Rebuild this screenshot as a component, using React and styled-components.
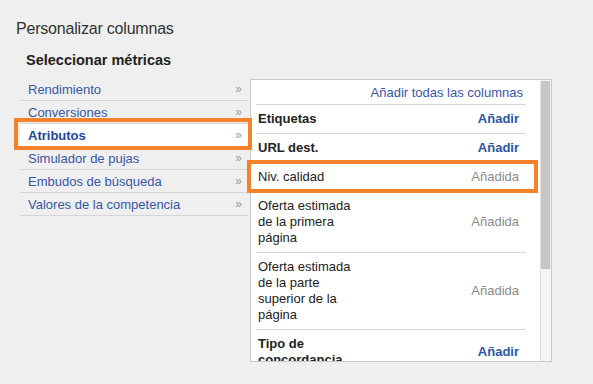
import React from "react";
import styled, { createGlobalStyle } from "styled-components";

const Global = createGlobalStyle`
  html, body { margin: 0; padding: 0; background: #efefef; }
  body { font-family: "Liberation Sans", Arial, sans-serif; width: 593px; height: 384px; overflow: hidden; }
`;

const Page = styled.div`
  padding: 19px 0 0 16px;
`;

const Title = styled.h1`
  margin: 0;
  font-family: "Liberation Sans Narrow", "Arial Narrow", "Liberation Sans", Arial, sans-serif;
  font-size: 16px;
  letter-spacing: -0.2px;
  line-height: 19px;
  font-weight: normal;
  color: #333;
`;

const Subtitle = styled.h2`
  margin: 14px 0 0 10px;
  font-size: 14.5px;
  line-height: 17px;
  font-weight: bold;
  color: #222;
`;

const Main = styled.div`
  display: flex;
  align-items: flex-start;
  margin-top: 9px;
  margin-left: 4px;
`;

const CatList = styled.ul`
  list-style: none;
  margin: 0;
  padding: 0;
  width: 228px;
`;

const CatRow = styled.li`
  position: relative;
  display: flex;
  align-items: center;
  justify-content: space-between;
  height: 22px;
  padding: 0 7px 0 8px;
  border-bottom: 1px solid #d6d6d6;
  background: ${(p) => (p.$active ? "#fff" : "transparent")};
  color: ${(p) => (p.$active ? "#24469a" : "#3758a8")};
  font-size: 13px;
  font-weight: ${(p) => (p.$active ? "bold" : "normal")};
`;

const Chevron = styled.span`
  color: #9a9a9a;
  font-size: 12px;
  font-weight: normal;
  letter-spacing: -1px;
`;

const Highlight = styled.span`
  position: absolute;
  top: ${(p) => p.$t}px;
  bottom: ${(p) => p.$b}px;
  left: ${(p) => p.$l}px;
  right: ${(p) => p.$r}px;
  border: 4px solid #f5822a;
  pointer-events: none;
`;

const Panel = styled.div`
  display: flex;
  margin-left: 2px;
  margin-top: 1px;
  width: 300px;
  height: 281px;
  background: #fff;
  border: 1px solid #c9c9c9;
`;

const PanelBody = styled.div`
  width: 270px;
  margin-left: 5px;
  overflow-x: visible;
  overflow-y: clip;
`;

const HeaderRow = styled.div`
  display: flex;
  justify-content: flex-end;
  padding: 5px 3px 3px 0;
  line-height: 16px;
  border-bottom: 1px solid #d6d6d6;
  font-size: 13px;
  color: #3758a8;
`;

const MetricRow = styled.div`
  position: relative;
  display: flex;
  align-items: center;
  justify-content: space-between;
  padding: 6px 7px 6px 2px;
  border-bottom: 1px solid #d6d6d6;
  font-size: 13px;
  line-height: 16px;
`;

const MetricName = styled.span`
  width: 100px;
  color: #222;
  font-weight: ${(p) => (p.$bold ? "bold" : "normal")};
`;

const Action = styled.span`
  font-weight: ${(p) => (p.$added ? "normal" : "bold")};
  color: ${(p) => (p.$added ? "#8a8a8a" : "#2b56a8")};
`;

const Track = styled.div`
  margin-left: auto;
  width: 10px;
  border-left: 1px solid #e2e2e2;
  background: #f4f4f4;
  padding: 1px 0 0 0;
`;

const Thumb = styled.div`
  width: 9px;
  height: 188px;
  background: #c6c6c6;
`;

const cats = [
  "Rendimiento",
  "Conversiones",
  "Atributos",
  "Simulador de pujas",
  "Embudos de búsqueda",
  "Valores de la competencia",
];

const metrics = [
  { name: "Etiquetas", bold: true, added: false },
  { name: "URL dest.", bold: true, added: false },
  { name: "Niv. calidad", bold: false, added: true, hl: true },
  { name: "Oferta estimada de la primera página", bold: false, added: true },
  { name: "Oferta estimada de la parte superior de la página", bold: false, added: true },
  { name: "Tipo de concordancia", bold: true, added: false },
];

export default function App() {
  return (
    <Page>
      <Global />
      <Title>Personalizar columnas</Title>
      <Subtitle>Seleccionar métricas</Subtitle>
      <Main>
        <CatList>
          {cats.map((c) => {
            const active = c === "Atributos";
            return (
              <CatRow key={c} $active={active}>
                <span>{c}</span>
                <Chevron>»</Chevron>
                {active && <Highlight $t={-6} $b={-4} $l={-6} $r={-4} />}
              </CatRow>
            );
          })}
        </CatList>
        <Panel>
          <PanelBody>
            <HeaderRow>Añadir todas las columnas</HeaderRow>
            {metrics.map((m) => (
              <MetricRow key={m.name}>
                <MetricName $bold={m.bold}>{m.name}</MetricName>
                <Action $added={m.added}>{m.added ? "Añadida" : "Añadir"}</Action>
                {m.hl && <Highlight $t={-3} $b={-2} $l={-9} $r={-12} />}
              </MetricRow>
            ))}
          </PanelBody>
          <Track>
            <Thumb />
          </Track>
        </Panel>
      </Main>
    </Page>
  );
}
